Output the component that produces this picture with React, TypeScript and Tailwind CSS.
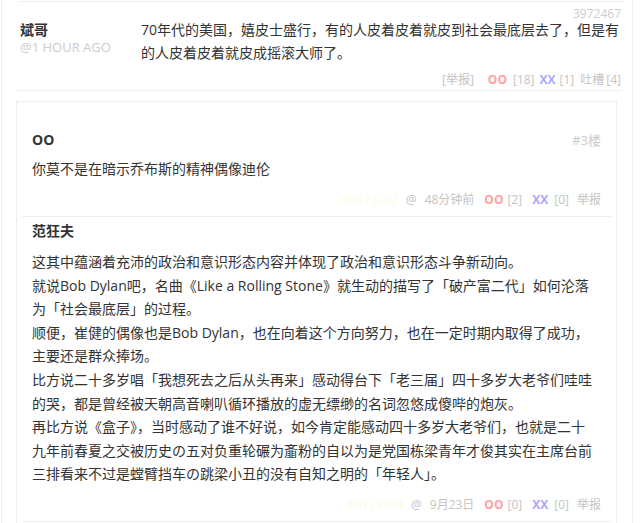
import React from "react"

const paragraphs: string[] = [
  "这其中蕴涵着充沛的政治和意识形态内容并体现了政治和意识形态斗争新动向。",
  "就说Bob Dylan吧，名曲《Like a Rolling Stone》就生动的描写了「破产富二代」如何沦落为「社会最底层」的过程。",
  "顺便，崔健的偶像也是Bob Dylan，也在向着这个方向努力，也在一定时期内取得了成功，主要还是群众捧场。",
  "比方说二十多岁唱「我想死去之后从头再来」感动得台下「老三届」四十多岁大老爷们哇哇的哭，都是曾经被天朝高音喇叭循环播放的虚无缥缈的名词忽悠成傻哔的炮灰。",
  "再比方说《盒子》，当时感动了谁不好说，如今肯定能感动四十多岁大老爷们，也就是二十九年前春夏之交被历史の五对负重轮碾为齑粉的自以为是党国栋梁青年才俊其实在主席台前三排看来不过是螳臂挡车の跳梁小丑的没有自知之明的「年轻人」。",
]

function ReplyFooter({ id, time, oo, xx }: { id: string; time: string; oo: number; xx: number }) {
  return (
    <div className="flex justify-end items-center gap-[8px] text-[12px] leading-[20px] text-[#c4c4c4]">
      <span className="text-[#fcfbe3]">{id}</span>
      <span>@</span>
      <span>{time}</span>
      <span className="flex gap-[4px] ml-[2px]">
        <b className="text-[#ff9f9f]">OO</b>
        <span>[{oo}]</span>
      </span>
      <span className="flex gap-[6px] ml-[2px]">
        <b className="text-[#a8a8ff]">XX</b>
        <span>[{xx}]</span>
      </span>
      <span>举报</span>
    </div>
  )
}

export default function App() {
  return (
    <div className="w-[641px] h-[523px] overflow-hidden bg-white text-[#333] font-['Open_Sans','Noto_Sans_CJK_SC',sans-serif]">
      <div className="ml-[1px] w-[632px] h-full border-x border-[#f0f0f0]">
        {/* previous comment edge */}
        <div className="ml-[18px] w-[603px] h-[2px] border-b border-[#eeeeee]" />

        {/* main comment */}
        <div className="relative ml-[14px] w-[606px] border-b border-[#eeeeee] pt-[16px] pl-[4px] pr-[1px]">
          <span className="absolute right-[1px] top-[7px] text-[12px] leading-[10px] text-[#cccccc]">3972467</span>
          <div className="flex">
            <div className="w-[121px] pt-[2px]">
              <div className="text-[14px] leading-[20px] font-bold text-[#333]">斌哥</div>
              <div className="text-[13px] leading-[14px] text-[#cccccc]">@1 HOUR AGO</div>
            </div>
            <div className="flex-1 text-[14px] leading-[23px] text-[#333]">
              70年代的美国，嬉皮士盛行，有的人皮着皮着就皮到社会最底层去了，但是有的人皮着皮着就皮成摇滚大师了。
            </div>
          </div>
          <div className="mt-[6px] flex justify-end items-center text-[12px] leading-[20px] text-[#c4c4c4]">
            <span>[举报]</span>
            <b className="ml-[14px] text-[#ff9f9f]">OO</b>
            <span className="ml-[6px]">[18]</span>
            <b className="ml-[5px] text-[#a8a8ff]">XX</b>
            <span className="ml-[4px]">[1]</span>
            <span className="ml-[6px]">吐槽</span>
            <span className="ml-[2px]">[4]</span>
          </div>
        </div>

        {/* replies */}
        <div className="mt-[10px] ml-[14px] w-[601px] h-[500px] border border-[#eeeeee]">
          <div className="mx-[5px] border-b border-[#eeeeee] pl-[10px] pr-[10px] pt-[28px] pb-[6px]">
            <div className="flex justify-between items-center leading-[20px]">
              <span className="text-[14px] font-bold text-[#333]">OO</span>
              <span className="text-[13px] text-[#cccccc]">#3楼</span>
            </div>
            <div className="mt-[9px] text-[14px] leading-[20px] text-[#333]">你莫不是在暗示乔布斯的精神偶像迪伦</div>
            <div className="mt-[11px]">
              <ReplyFooter id="#3173202" time="48分钟前" oo={2} xx={0} />
            </div>
          </div>

          <div className="mx-[5px] border-b border-[#eeeeee] pl-[10px] pr-[10px] pt-[4px] pb-[6px]">
            <div className="text-[14px] leading-[20px] font-bold text-[#333]">范狂夫</div>
            <div className="mt-[9px] w-[563px] text-[14px] leading-[23.6px] text-[#333]">
              {paragraphs.map((p, i) => (
                <div key={i}>{p}</div>
              ))}
            </div>
            <div className="mt-[9px]">
              <ReplyFooter id="#3173354" time="9月23日" oo={0} xx={0} />
            </div>
          </div>
        </div>
      </div>
    </div>
  )
}
